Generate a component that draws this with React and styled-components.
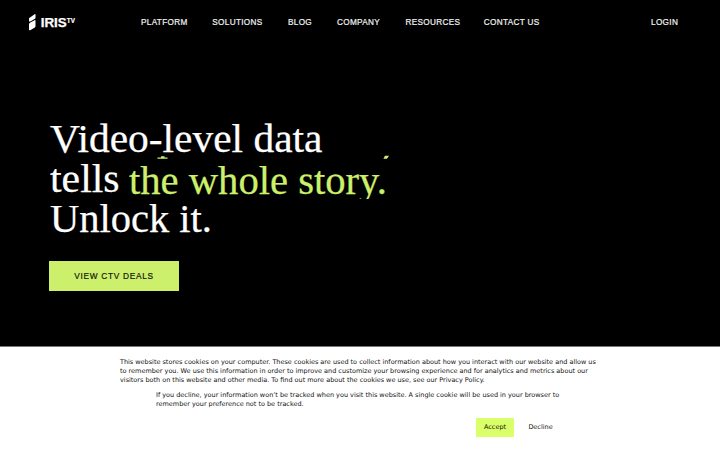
import React from 'react';
import styled, { createGlobalStyle } from 'styled-components';

const colors = {
  lime: '#cdf06c',
  accept: '#d9ff69',
  ink: '#111'
};

const GlobalStyle = createGlobalStyle`
  * {
    box-sizing: border-box;
  }

  body {
    margin: 0;
    background: #000;
    overflow: hidden;
  }
`;

const Page = styled.div`
  display: flex;
  flex-direction: column;
  width: 720px;
  height: 450px;
  background: #000;
  color: #fff;
  font-family: 'Liberation Sans', Arial, sans-serif;
`;

const Header = styled.header`
  display: flex;
  align-items: center;
  height: 44px;
  padding: 0 41px 0 28px;
`;

const Logo = styled.svg`
  display: block;
  width: 50px;
  height: 18px;
  flex: none;
`;

const Nav = styled.nav`
  display: flex;
  gap: 25px;
  margin-left: 63px;
`;

const NavLink = styled.a`
  width: ${({ $width }) => $width}px;
  padding-top: 2px;
  font-size: 8.2px;
  letter-spacing: 0.33px;
  line-height: 12px;
  color: #f2f2f2;
  -webkit-text-stroke: 0.2px #f2f2f2;
  white-space: nowrap;
`;

const LoginLink = styled(NavLink)`
  margin-left: auto;
`;

const Hero = styled.main`
  flex: 1;
  padding: 75px 49px 0;
`;

const Title = styled.h1`
  margin: 0 0 0 1px;
  font-family: 'Liberation Serif', serif;
  font-size: 39.5px;
  font-weight: 400;
  -webkit-text-stroke: 0.25px currentColor;
`;

const TitleLine = styled.div`
  display: flex;
  height: 40px;
  line-height: 40px;
  white-space: nowrap;
`;

const Stretch = styled.span`
  display: block;
  transform: scaleX(${({ $x }) => $x});
  transform-origin: 0 0;
`;

const Rotator = styled.span`
  position: relative;
  margin-left: 13px;
  color: ${colors.lime};
`;

const RotatorWindow = styled.span`
  display: block;
  width: 264px;
  height: 44px;
  padding-top: 2px;
  clip-path: inset(0 0 4px 0);
`;

// descenders of the phrase that is sliding out
const Leaving = styled.svg`
  position: absolute;
  left: 28px;
  top: -4px;
  width: 234px;
  height: 5px;
`;

const DealsButton = styled.a`
  display: flex;
  align-items: center;
  justify-content: center;
  width: 130px;
  height: 30px;
  margin-top: 22px;
  background: ${colors.lime};
  color: #15180b;
  font-size: 8.3px;
  letter-spacing: 0.72px;
  -webkit-text-stroke: 0.2px #15180b;
`;

const CookieBanner = styled.section`
  height: 104px;
  padding: 10.5px 120px 0;
  border-top: 1px solid #777;
  background: #fff;
  color: ${colors.ink};
  font-family: 'DejaVu Sans', sans-serif;
  font-size: 6.49px;
  line-height: 9px;
`;

const Paragraph = styled.p`
  margin: 0 0 6px ${({ $indent }) => $indent || 0}px;
  white-space: nowrap;
`;

const Line = styled.span`
  display: block;
`;

const Actions = styled.div`
  display: flex;
  gap: 4px;
  margin-left: 356px;
  padding-top: 3px;
`;

const CookieButton = styled.button`
  width: ${({ $width }) => $width}px;
  height: 19px;
  padding: 0;
  border: 0;
  background: ${({ $primary }) => ($primary ? colors.accept : 'transparent')};
  color: ${colors.ink};
  font: inherit;
`;

const links = [
  { label: 'PLATFORM', width: 46.3 },
  { label: 'SOLUTIONS', width: 50.7 },
  { label: 'BLOG', width: 24 },
  { label: 'COMPANY', width: 43.5 },
  { label: 'RESOURCES', width: 53.3 },
  { label: 'CONTACT US', width: 56 }
];

function IrisLogo() {
  return (
    <Logo viewBox="0 0 50 18" aria-label="IRIS TV">
      <g fill="#fff">
        <path d="M1 5.2 6.6 1.2c.5-.3.9-.1.9.5v2.5c0 1-.3 1.5-1 1.9L2.4 8.4C1.5 8.9 1 8.5 1 7.7z" />
        <path d="M1 11.3c0-.8.3-1.2.9-1.6l4.7-2.5c.5-.3.9-.1.9.5v5c0 1-.3 1.6-1.1 2.1L2.2 17.2c-.8.3-1.2 0-1.2-.7z" />
        <text
          x="12.7"
          y="13.6"
          fontFamily="Liberation Sans"
          fontSize="12"
          fontWeight="700"
          stroke="#fff"
          strokeWidth="0.25"
          textLength="26"
          lengthAdjust="spacingAndGlyphs"
        >
          IRIS
        </text>
        <text
          x="38.8"
          y="9.6"
          fontFamily="Liberation Sans"
          fontSize="6.3"
          fontWeight="700"
          stroke="#fff"
          strokeWidth="0.2"
          textLength="8.2"
        >
          TV
        </text>
      </g>
    </Logo>
  );
}

export default function App() {
  return (
    <Page>
      <GlobalStyle />
      <Header>
        <IrisLogo />
        <Nav>
          {links.map(({ label, width }) => (
            <NavLink key={label} $width={width}>
              {label}
            </NavLink>
          ))}
        </Nav>
        <LoginLink $width={28}>LOGIN</LoginLink>
      </Header>
      <Hero>
        <Title>
          <TitleLine>
            <Stretch $x={1.049}>Video-level data</Stretch>
          </TitleLine>
          <TitleLine>
            <Stretch $x={1.057}>tells</Stretch>
            <Rotator>
              <RotatorWindow>
                <Stretch $x={1.028}>the whole story.</Stretch>
              </RotatorWindow>
              <Leaving viewBox="0 0 234 5" fill={colors.lime}>
                <path d="M0.5 2.5h10v1.3h-10zM4 1.3h3.5v1.2H4zM228 .8h4l-2 3h-3.6z" />
              </Leaving>
            </Rotator>
          </TitleLine>
          <TitleLine>
            <Stretch $x={1.025}>Unlock it.</Stretch>
          </TitleLine>
        </Title>
        <DealsButton>VIEW CTV DEALS</DealsButton>
      </Hero>
      <CookieBanner>
        <Paragraph>
          <Line>
            This website stores cookies on your computer. These cookies are used to collect information about how you
            interact with our website and allow us
          </Line>
          <Line>
            to remember you. We use this information in order to improve and customize your browsing experience and for
            analytics and metrics about our
          </Line>
          <Line>
            visitors both on this website and other media. To find out more about the cookies we use, see our Privacy
            Policy.
          </Line>
        </Paragraph>
        <Paragraph $indent={36}>
          <Line>
            If you decline, your information won’t be tracked when you visit this website. A single cookie will be used
            in your browser to
          </Line>
          <Line>remember your preference not to be tracked.</Line>
        </Paragraph>
        <Actions>
          <CookieButton $primary $width={38}>
            Accept
          </CookieButton>
          <CookieButton $width={45}>Decline</CookieButton>
        </Actions>
      </CookieBanner>
    </Page>
  );
}
